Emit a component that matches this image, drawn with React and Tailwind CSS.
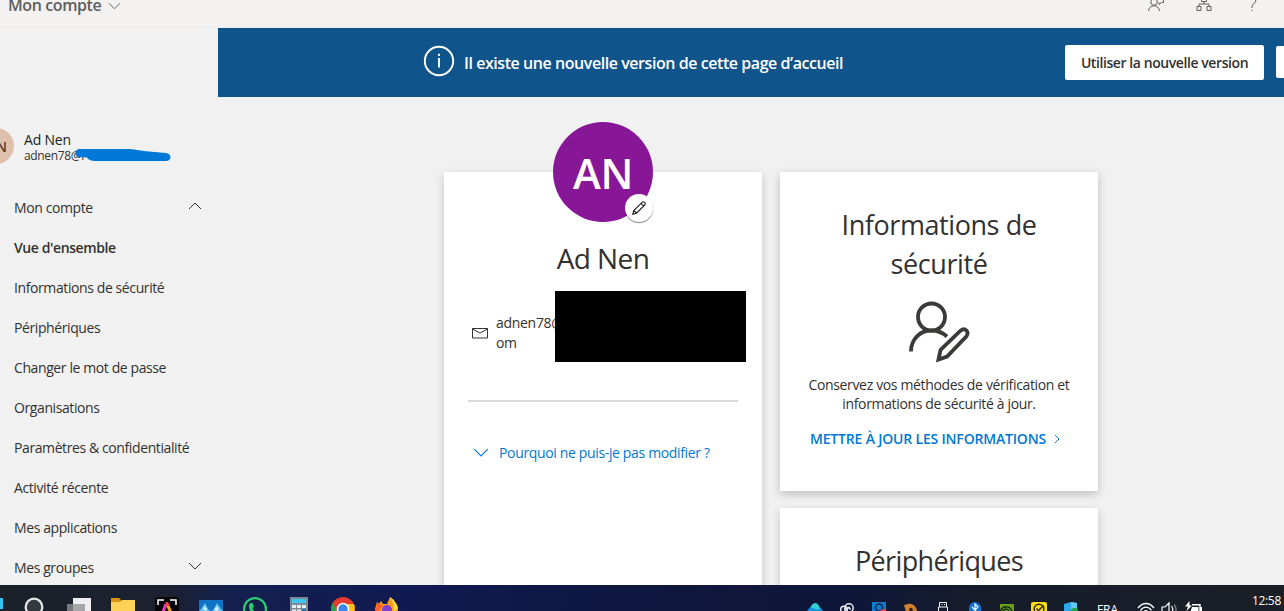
import React from 'react';
import { clsx } from 'clsx';

const menuItems = [
    { label: 'Mon compte', chevron: 'up' },
    { label: "Vue d'ensemble", active: true },
    { label: 'Informations de sécurité' },
    { label: 'Périphériques' },
    { label: 'Changer le mot de passe' },
    { label: 'Organisations' },
    { label: 'Paramètres & confidentialité' },
    { label: 'Activité récente' },
    { label: 'Mes applications' },
    { label: 'Mes groupes', chevron: 'down' },
];

const Chevron = ({ dir = 'down', className = 'w-3.5 h-2' }) => (
    <svg viewBox="0 0 14 8" fill="none" stroke="currentColor" className={clsx('shrink-0', dir === 'up' && 'rotate-180', className)}>
        <path d="M1 1l6 6 6-6" />
    </svg>
);

const TopBar = () => (
    <header className="h-7 shrink-0 flex items-start justify-between bg-[#f3f2f1] border-b border-[#edebe9] text-[#605e5c]">
        <div className="flex items-center gap-[7px] pl-2 -mt-[7px]">
            <span className="text-[16px] leading-6 font-semibold tracking-[-0.4px]">Mon compte</span>
            <Chevron className="mt-0.5 w-[13px] h-2" />
        </div>
        <div className="flex gap-8 pr-6 -mt-1">
            <svg width="16" height="16" viewBox="0 0 16 16" fill="none" stroke="currentColor">
                <circle cx="6" cy="6" r="3.3" />
                <path d="M.5 15c.4-3.300 2.500-5.200 5.500-5.200s5.100 1.900 5.500 5.200M9 1.500h6.500v5h-2l-2.500 2v-2" />
            </svg>
            <svg width="16" height="16" viewBox="0 0 16 16" fill="none" stroke="currentColor">
                <path d="M5.500 1.500h5v4h-5zM1 10.500h4v4H1zM11 10.500h4v4h-4zM8 5.500V8M3 10.500V8h10v2.500" />
            </svg>
            <svg width="16" height="16" viewBox="0 0 16 16" fill="none" stroke="currentColor">
                <path d="M5 3.500C5.500 1.500 7 .8 8.500.8c2 0 3.500 1.300 3.500 3.200C12 7.300 7.800 7.500 7.800 12M7.300 14.500h1.200" />
            </svg>
        </div>
    </header>
);

const Sidebar = () => (
    <aside className="w-[218px] shrink-0 pt-[98px] text-[#323130]">
        <div className="flex items-center gap-2.5 -ml-[22px] h-10">
            <div className="w-9 h-9 rounded-full bg-[#dfc0ac] flex items-center justify-end pr-[7px] text-[14px] font-semibold text-[#5b3a2c]">AN</div>
            <div className="relative mt-1">
                <p className="text-[14px] leading-[16px] tracking-[-0.2px] text-[#201f1e]">Ad Nen</p>
                <p className="text-[12px] leading-[16px] tracking-[-0.35px]">adnen78@r</p>
                <svg className="absolute left-[50px] top-[17px]" width="98" height="14" viewBox="0 0 98 14">
                    <path d="M5 0h50c8 .5 12 2 20 2.500l17 1.500c6 .5 6 8 0 8H21c-4 0-7-1.500-8-3.500L5 8C0 7.500 0 1 5 0z" fill="#0078d7" />
                </svg>
            </div>
        </div>
        <nav className="mt-[22px]">
            {menuItems.map((item) => (
                <div key={item.label} className={clsx('h-10 pb-0.5 pl-3.5 pr-4 flex items-center justify-between text-[14px] tracking-[-0.4px]', item.active && 'font-semibold')}>
                    <span>{item.label}</span>
                    {item.chevron && <Chevron dir={item.chevron} className="w-3.5 h-2 -mt-[3px]" />}
                </div>
            ))}
        </nav>
    </aside>
);

const Banner = () => (
    <div className="h-[69px] shrink-0 bg-[#10548c] flex items-center overflow-hidden">
        <div className="ml-[205px] w-[642px] shrink-0 flex items-center gap-[9px] text-white">
            <svg width="32" height="32" viewBox="0 0 32 32" fill="none" stroke="currentColor" className="-mt-1 shrink-0">
                <circle cx="16" cy="16" r="14.200" strokeWidth="1.900" />
                <path d="M16 13v9.500M16 8.800v2.200" strokeWidth="1.900" />
            </svg>
            <span className="text-[16px] font-semibold tracking-[-0.44px] whitespace-nowrap">Il existe une nouvelle version de cette page d’accueil</span>
        </div>
        <button className="w-[199px] h-[35px] shrink-0 bg-white rounded-[2px] text-[14px] font-semibold tracking-[-0.42px] text-[#323130] whitespace-nowrap">
            Utiliser la nouvelle version
        </button>
        <button className="ml-3 w-8 h-8 shrink-0 bg-white rounded-[2px] -mt-0.5" aria-label="Fermer" />
    </div>
);

const ProfileCard = () => (
    <section className="w-[318px] h-[500px] bg-white shadow-[0_3px_9px_rgba(0,0,0,0.18)] px-6 flex flex-col items-center text-[#323130]">
        <div className="relative -mt-[50px] w-[100px] h-[100px] shrink-0 rounded-full bg-[#881798] flex items-center justify-center text-white text-[42px] font-semibold">
            <span className="tracking-[-0.3px]">AN</span>
            <div className="absolute left-[72px] top-[72px] w-7 h-7 rounded-full bg-white shadow-[0_1px_1px_rgba(0,0,0,0.5)] flex items-center justify-center">
                <svg width="14" height="14" viewBox="0 0 14 14" fill="none" stroke="#201f1e" strokeWidth="1.100">
                    <path d="M.8 13.200l1-3.700L10 1.300c1.700-1.500 4.200 1 2.700 2.700L4.500 12.200zM1.800 9.500l2.700 2.700M9 2.300L11.700 5" />
                </svg>
            </div>
        </div>
        <h2 className="mt-[17px] text-[28px] leading-[38px] tracking-[-0.6px]">Ad Nen</h2>
        <div className="relative mt-9 w-full flex items-center gap-2 pl-1 text-[14px] leading-5">
            <svg width="16" height="12" viewBox="0 0 16 12" fill="none" stroke="currentColor" className="shrink-0">
                <path d="M.5 1.500h15v9.500H.5zM.5 2l7.500 4 7.500-4" />
            </svg>
            <p className="tracking-[-0.3px]">adnen78@<br />om</p>
            <div className="absolute left-[87px] -top-[22px] w-[190.5px] h-[71px] bg-black" />
        </div>
        <div className="mt-[47px] w-[270px] h-0.5 bg-[#dadada] shrink-0" />
        <div className="mt-[39px] w-full flex items-center gap-2.5 pl-[5px] text-[14px] leading-6 text-[#0078d4]">
            <Chevron className="w-4 h-[9px] -mt-0.5" />
            <span className="tracking-[-0.35px]">Pourquoi ne puis-je pas modifier ?</span>
        </div>
    </section>
);

const SecurityCard = () => (
    <section className="w-[318px] h-[319px] shrink-0 bg-white shadow-[0_3px_9px_rgba(0,0,0,0.22)] pt-[33px] flex flex-col items-center text-center text-[#323130]">
        <h2 className="text-[27px] leading-[39px] tracking-[-0.42px] w-[230px]">Informations de sécurité</h2>
        <svg width="62" height="62" viewBox="0 0 62 62" fill="none" stroke="#3b3a39" strokeWidth="3.800" className="mt-[18px] -ml-px">
            <circle cx="23.500" cy="16" r="13.500" />
            <path d="M3 50.500C3 38 12 29.500 23.500 29.500c6 0 11 2 15.500 6" />
            <path d="M30.500 58.500l2-9.500L52.500 29.700c4.500-3.500 9 1 6 5.500L39 55.500z" />
        </svg>
        <p className="mt-3 text-[14px] leading-[19px] tracking-[-0.35px] w-[280px]">
            Conservez vos méthodes de vérification et informations de sécurité à jour.
        </p>
        <a className="mt-4 mr-2 flex items-center gap-2 text-[14px] leading-5 font-semibold tracking-[-0.18px] whitespace-nowrap text-[#0078d4]">
            METTRE À JOUR LES INFORMATIONS
            <svg width="6" height="10" viewBox="0 0 6 10" fill="none" stroke="currentColor"><path d="M1 1l4 4-4 4" /></svg>
        </a>
    </section>
);

const pinnedApps = [
    // Démarrer
    <svg key="start" width="24" height="24" viewBox="0 0 24 24"><path d="M0 1h11v11H0zM12 1h12v11H12z" fill="#35c1f1" /></svg>,
    // Recherche
    <svg key="search" width="24" height="24" viewBox="0 0 24 24"><circle cx="11" cy="10" r="8.300" fill="#33383f" stroke="#e4e7ea" strokeWidth="2.200" /></svg>,
    // Vue des tâches
    <svg key="tasks" width="24" height="24" viewBox="0 0 24 24"><path d="M6 1h18v20H6z" fill="#eceef0" /><path d="M0 7h6v17H0z" fill="#77797c" /><path d="M6 7h12v17H6z" fill="#a5a6a8" /></svg>,
    // Explorateur
    <svg key="files" width="24" height="24" viewBox="0 0 24 24"><path d="M0 1h8l2 2v5H0z" fill="#d8930f" /><path d="M0 5h9l2-2h13v20H0z" fill="#fdd056" /></svg>,
    <svg key="acro" width="24" height="24" viewBox="0 0 24 24" fill="none">
        <rect width="24" height="24" rx="3" fill="#06060a" />
        <path d="M3 8V3h6M15 3h6v5" stroke="#fff" strokeWidth="1.500" />
        <path d="M6 20l5-13" stroke="#e838c8" strokeWidth="3" /><path d="M12 7l6 13" stroke="#f7a51c" strokeWidth="3" />
        <path d="M9.500 9l1.500-4h2l1.500 4z" fill="#ef4444" />
    </svg>,
    // Photos
    <svg key="photos" width="24" height="24" viewBox="0 0 24 24">
        <path d="M0 3h24v21H0z" fill="#1273c4" />
        <path d="M0 14l2-2 4-6 3 6 3 3 3-3 3-6 4 6 2 2v10H0z" fill="#5fc3f5" />
        <path d="M4 12l2-3 2 3-1 2zM15 12l3-3 2 4-3 1z" fill="#d4f1fd" />
    </svg>,
    // WhatsApp
    <svg key="wa" width="24" height="24" viewBox="0 0 24 24">
        <circle cx="12" cy="12" r="10.900" fill="#14204a" stroke="#2cc970" strokeWidth="2.200" />
        <path d="M7.500 6h2l1.500 3.500L9.500 11.500c1 2 2 3 4 4l3 1v3c-6 0-11-5-10.500-11.500z" fill="#2cc970" />
    </svg>,
    // Calculatrice
    <svg key="calc" width="24" height="24" viewBox="0 0 24 24"><path d="M3 0h18v24H3z" fill="#7d8a96" /><path d="M5 2h14v4H5z" fill="#38c5ef" /><path d="M5 8h4v3H5zM10 8h4v3h-4zM15 8h4v3h-4zM5 12.500h4v3H5zM10 12.500h4v3h-4z" fill="#e8edf1" /><path d="M15 12.500h4v3h-4z" fill="#1c67a8" /></svg>,
    // Chrome
    <svg key="chrome" width="24" height="24" viewBox="0 0 24 24"><circle cx="12" cy="12" r="12" fill="#e53b2e" /><path d="M1.500 6L7 15l-1 7C0 18 -1 11 1.500 6z" fill="#2ba24c" /><path d="M12 7h11c2 5 0 11-4 14l-5-4z" fill="#fbc116" /><circle cx="12" cy="12" r="5.500" fill="#3f83f0" stroke="#fff" strokeWidth="1.500" /></svg>,
    // Firefox
    <svg key="firefox" width="24" height="24" viewBox="0 0 24 24"><path d="M2 5l2 2 2-3 2 3h4l3-7 6 6 2 8-5 10H4L0 12z" fill="#ff9a1f" /><path d="M15 0l3 6 1 8 4-2c0-5-4-7-4-9z" fill="#ffd83b" /><path d="M2 5l2 2 4 2-5 5-2 0z" fill="#ff5b2c" /><circle cx="12" cy="13" r="5" fill="#8140d0" /></svg>,
];

const trayIcons = [
    <svg key="cloud" width="18" height="16" viewBox="0 0 18 16"><path d="M1 10c1-2 3-3 4-5 2-3 6-3 8 0 1 2 3 3 4 5v6H1z" fill="#1490df" /><path d="M5 6c2-5 6-5 8-1l1 3c-3 1-6 0-9-2z" fill="#34cfd0" /></svg>,
    <svg key="cc" width="16" height="16" viewBox="0 0 16 16" fill="none" stroke="#e8eaee" strokeWidth="1.500"><circle cx="10" cy="7" r="4.200" /><circle cx="5" cy="8.500" r="3.300" /><path d="M5 9l5-2.500 1.500 2" /></svg>,
    <svg key="shield" width="16" height="16" viewBox="0 0 16 16"><path d="M1 1h14v11l-7 4-7-4z" fill="#1379c9" /><circle cx="8" cy="6.500" r="3.500" fill="none" stroke="#0c2b53" strokeWidth="1.600" /><circle cx="12.500" cy="11.500" r="3.500" fill="#e5484d" /></svg>,
    <svg key="brown" width="16" height="16" viewBox="0 0 16 16"><path d="M1 4l4-1c5-1 9 3 9 8l-3 4-8-4z" fill="#cf812e" /><circle cx="8" cy="8.500" r="1.800" fill="#2b2118" /></svg>,
    <svg key="usb" width="16" height="16" viewBox="0 0 16 16" fill="none" stroke="#f1f2f4"><path d="M4.500 6V1.500h7V6M3.500 6h9v10h-9zM6.500 3.500h1M9 3.500h1" /></svg>,
    <svg key="bt" width="16" height="16" viewBox="0 0 16 16"><rect x="2" y="1" width="12" height="16" rx="6" fill="#1173d8" /><path d="M5 6l6 6-3 3V3l3 3-6 6" fill="none" stroke="#fff" strokeWidth="1.100" /></svg>,
    <svg key="nv" width="16" height="16" viewBox="0 0 16 16"><path d="M1 3h14v13H1z" fill="#67a01f" /><path d="M1 10c4-6 10-5 12 0-4 4-8 4-9 0 3-3 5-2 6 0" fill="none" stroke="#16260e" strokeWidth="1.500" /></svg>,
    <svg key="norton" width="16" height="16" viewBox="0 0 16 16"><rect y="1" width="16" height="16" rx="2" fill="#fbdc19" /><circle cx="8" cy="8" r="4.800" fill="none" stroke="#302e12" strokeWidth="1.500" /><path d="M5.500 7.500l2 2 5-5" fill="none" stroke="#302e12" strokeWidth="1.500" /></svg>,
    <svg key="defender" width="16" height="16" viewBox="0 0 16 16"><path d="M1 3l7-2 6 1v11l-6 3-7-3z" fill="#2fa7ec" /><path d="M8 1l6 1v9H8z" fill="#61c8f5" /><circle cx="11.500" cy="11" r="4" fill="#21a045" /></svg>,
];

const Taskbar = () => (
    <footer className="h-[26px] shrink-0 overflow-hidden flex items-start justify-between text-white bg-[linear-gradient(90deg,#1b2129_0%,#1b2130_13%,#13204f_18%,#101a52_32%,#0d1740_48%,#11163a_58%,#0d1638_66%,#171c2b_76%,#1a1f27_100%)]">
        <div className="flex -ml-[31px] pt-3">
            {pinnedApps.map((icon, i) => (
                <div key={i} className="w-11 flex justify-center">{icon}</div>
            ))}
        </div>
        <div className="flex items-start">
            <div className="flex pt-4">
                {trayIcons.map((icon, i) => (
                    <div key={i} className="w-8 flex justify-center">{icon}</div>
                ))}
            </div>
            <span className="ml-[10px] w-10 pt-4 text-[12px] leading-[18px]">FRA</span>
            <div className="flex gap-1.5 pt-4">
                <svg width="18" height="16" viewBox="0 0 18 16" fill="none" stroke="#fff" strokeWidth="1.300"><path d="M1 7c4.500-6 11.500-6 16 0M3.500 9.500c3-4.500 8-4.500 11 0M6 12c2-3 4-3 6 0" /></svg>
                <svg width="18" height="16" viewBox="0 0 18 16" fill="none" stroke="#fff" strokeWidth="1.200"><path d="M1 6h3l4-4v13l-4-4H1zM10.500 5c1.500 2 1.500 5 0 7" /><path d="M13 3.500c2.500 3 2.500 7 0 10" stroke="#7c828b" /></svg>
                <svg width="18" height="16" viewBox="0 0 18 16" fill="none" stroke="#fff" strokeWidth="1.400"><path d="M7 3.700h8v9.800H3.500v-3" /><path d="M15 6h2v5h-2z" fill="#fff" stroke="none" /><path d="M7 6h6.500v6H5z" fill="#fff" stroke="none" /><path d="M4.500 0L0 5.500h3L1.500 10 7 4.500H4.500z" fill="#fff" stroke="none" /></svg>
            </div>
            <span className="ml-[49px] mr-[3px] pt-[7px] text-[12px] leading-[18px] tracking-[-0.3px]">12:58</span>
        </div>
    </footer>
);

export default function App() {
    return (
        <div className="w-[1284px] h-[611px] overflow-hidden flex flex-col bg-[#f1f1f1] font-['Open_Sans','Noto_Sans',sans-serif]">
            <TopBar />
            <div className="flex-1 min-h-0 flex overflow-hidden">
                <Sidebar />
                <main className="flex-1 min-w-0 flex flex-col">
                    <Banner />
                    <div className="flex items-start gap-[18px] pt-[75px] pl-[226px]">
                        <ProfileCard />
                        <div className="flex flex-col gap-[17px]">
                            <SecurityCard />
                            <section className="w-[318px] h-[319px] bg-white shadow-[0_3px_9px_rgba(0,0,0,0.18)] pt-[33px] text-center text-[#323130]">
                                <h2 className="text-[27px] leading-[39px] tracking-[-0.65px]">Périphériques</h2>
                            </section>
                        </div>
                    </div>
                </main>
            </div>
            <Taskbar />
        </div>
    );
}
